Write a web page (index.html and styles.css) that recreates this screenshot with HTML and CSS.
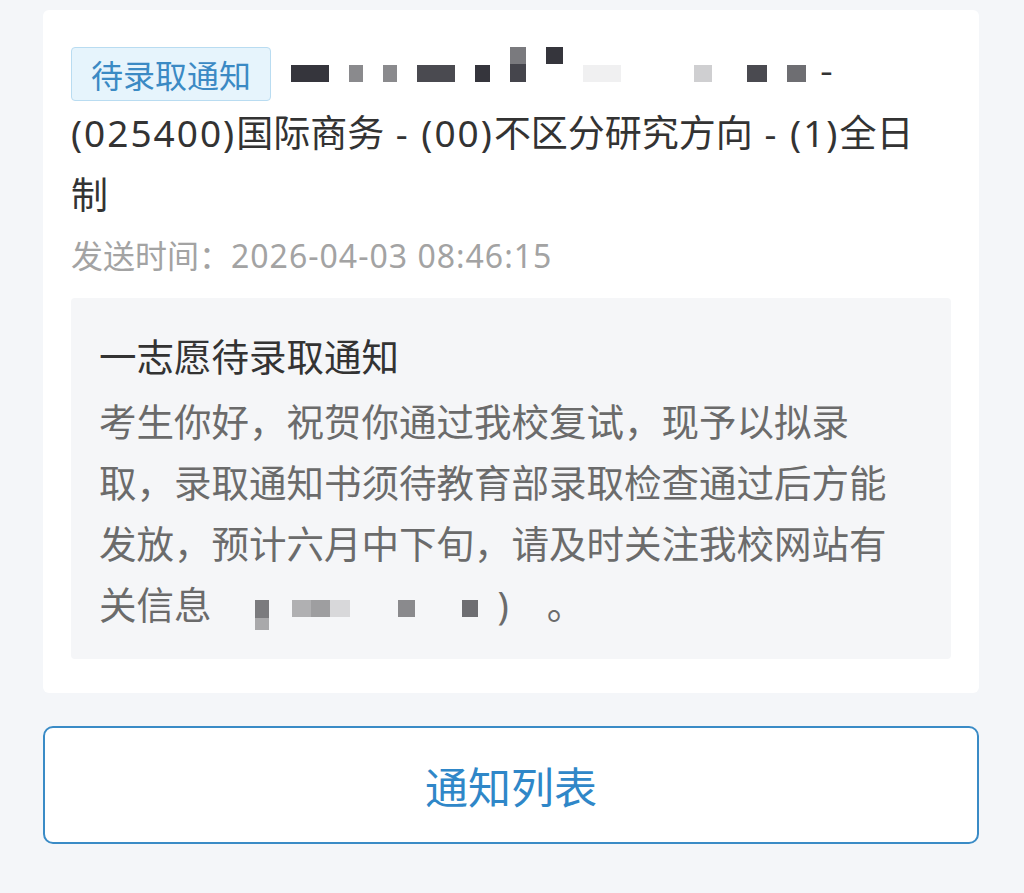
FILE: index.html
```html
<!DOCTYPE html>
<html lang="zh-CN">
<head>
<meta charset="utf-8">
<title>通知详情</title>
<link rel="stylesheet" href="styles.css">
</head>
<body>
<div class="page">
  <section class="card">
    <p class="title"><span class="tag">待录取通知</span><span class="redact r1"><i class="b d1 w38"></i><i class="b g2 w14"></i><i class="b g2 w14"></i><i class="b d2 w38"></i><i class="b d1 w15"></i><i class="b d3 w16 tall"></i><i class="b d1 w17 up"></i><i class="b l0 w38"></i><i class="b l2 w18 gapL"></i><i class="b d2 w20 gapM"></i><i class="b g1 w19"></i></span>-<br><span class="lat">(025400)</span>国际商务<span class="lat"> - (00)</span>不区分研究方向<span class="lat"> - (1)</span>全日制</p>
    <p class="time">发送时间：<span class="lat">2026-04-03 08:46:15</span></p>
    <div class="content">
      <h2 class="content-title">一志愿待录取通知</h2>
      <p class="content-body">考生你好，祝贺你通过我校复试，现予以拟录取，录取通知书须待教育部录取检查通过后方能发放，预计六月中下旬，请及时关注我校网站有关信息<span class="redact r2"><i class="b d4 w14 tall2"></i><i class="b l3 w58"></i><i class="b g2 w17"></i><i class="b g1 w16"></i></span><span class="paren">)</span>。</p>
    </div>
  </section>
  <button class="list-btn" type="button">通知列表</button>
</div>
</body>
</html>
```

FILE: styles.css
```css
html, body {
  margin: 0;
  padding: 0;
  background: #f4f6f9;
}
body {
  font-family: "Noto Sans CJK SC", sans-serif;
  width: 1024px;
  height: 893px;
  overflow: hidden;
}
.page {
  padding: 10px 45px 0 43px;
  display: flex;
  flex-direction: column;
  gap: 33px;
}
.card {
  background: #ffffff;
  border-radius: 6px;
  padding: 28px 28px 34px;
}
.title {
  margin: 0;
  padding-right: 20px;
  font-size: 37px;
  line-height: 60px;
  color: #333333;
}
.title .lat {
  font-family: "Noto Sans", sans-serif;
  letter-spacing: 2px;
}
.tag {
  display: inline-block;
  vertical-align: middle;
  height: 52px;
  line-height: 52px;
  padding: 0 19px;
  margin-right: 20px;
  font-size: 32px;
  color: #3b8ac4;
  background: #e6f4fc;
  border: 1px solid #b9dcf1;
  border-radius: 4px;
}
.redact {
  display: inline-flex;
  align-items: center;
  vertical-align: middle;
  height: 40px;
  position: relative;
}
.r1 { gap: 20px; margin-right: 14px; }
.r1 .gapL { margin-left: 53px; }
.r1 .gapM { margin-left: 15px; }
.r2 { gap: 23px; margin-left: 43px; margin-right: 20px; }
.r2 .w17 { margin-left: 25px; }
.r2 .w16 { margin-left: 24px; }
.paren {
  font-family: "Noto Sans", sans-serif;
  margin-right: 38px;
}
.b {
  display: inline-block;
  height: 17px;
}
.b.tall { height: 35px; position: relative; top: -9px; }
.b.tall2 { height: 30px; position: relative; top: 6px; }
.b.up { position: relative; top: -18px; }
.w14 { width: 14px; }
.w15 { width: 15px; }
.w16 { width: 16px; }
.w17 { width: 17px; }
.w18 { width: 18px; }
.w19 { width: 19px; }
.w20 { width: 20px; }
.w38 { width: 38px; }
.w58 { width: 58px; }
.d1 { background: #35353c; }
.d2 { background: #4a4a50; }
.d3 { background: linear-gradient(#7a7a7e 50%, #45454c 50%); }
.d4 { background: linear-gradient(#7b7b7e 60%, #a9a9ab 60%); }
.g1 { background: #6e6e72; }
.g2 { background: #8a8a8d; }
.l0 { background: #f0f0f1; }
.l2 { background: #cfcfd1; }
.l3 { background: linear-gradient(90deg, #b0b0b2 33%, #9e9ea0 33%, #9e9ea0 66%, #d8d8da 66%); }
.time {
  margin: 9px 0 20px;
  font-size: 32px;
  line-height: 44px;
  color: #a3a3a3;
}
.time .lat {
  font-family: "Noto Sans", sans-serif;
  letter-spacing: 1px;
}
.content {
  background: #f5f6f8;
  border-radius: 4px;
  padding: 26px 28px 24px;
}
.content-title {
  margin: 0 0 4px;
  font-size: 37.5px;
  font-weight: normal;
  line-height: 61px;
  color: #333333;
}
.content-body {
  margin: 0;
  font-size: 37.5px;
  line-height: 61px;
  color: #6b6b6b;
}
.list-btn {
  display: block;
  width: 100%;
  height: 118px;
  background: #ffffff;
  border: 2px solid #3a8bc6;
  border-radius: 10px;
  font-family: "Noto Sans CJK SC", sans-serif;
  font-size: 43px;
  color: #2f87c8;
  padding: 0;
}
```
